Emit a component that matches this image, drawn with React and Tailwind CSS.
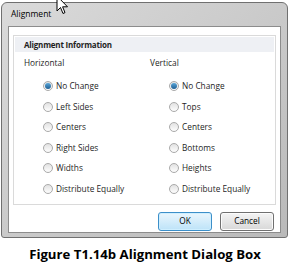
import React from "react";

const horizontal = ["No Change", "Left Sides", "Centers", "Right Sides", "Widths", "Distribute Equally"];
const vertical = ["No Change", "Tops", "Centers", "Bottoms", "Heights", "Distribute Equally"];

function Radio({ checked }) {
  return (
    <span className="w-[10px] h-[10px] rounded-full border border-[#a9a9a9] bg-gradient-to-b from-[#e2e2e2] to-[#fdfdfd] flex items-center justify-center shrink-0">
      {checked && <span className="w-[6px] h-[6px] rounded-full bg-gradient-to-b from-[#5aa7d9] to-[#1f5f93]" />}
    </span>
  );
}

function Column({ title, items }) {
  return (
    <div className="flex flex-col">
      <p className="h-[14px] leading-[14px]">{title}</p>
      <div className="flex flex-col gap-[10.6px] mt-[11px] pl-[19px]">
        {items.map((label, i) => (
          <label key={i} className="flex items-center gap-[3px] h-[10px] leading-[10px]">
            <Radio checked={i === 0} />
            <span>{label}</span>
          </label>
        ))}
      </div>
    </div>
  );
}

export default function App() {
  return (
    <div className="relative w-[290px] h-[270px] bg-white overflow-hidden text-[#1e1e1e] text-[8.3px]" style={{ fontFamily: '"Open Sans", "DejaVu Sans", sans-serif' }}>
      <div className="ml-[1px] mt-[2px] w-[287px] h-[236px] rounded-t-[6px] rounded-b-[3px] border border-[#707070] bg-gradient-to-br from-[#dadada] via-[#cacaca] to-[#b9b9b9] flex flex-col px-[6px] pb-[4px]">
        <div className="h-[23px] flex items-center pl-[3px] text-[8.5px] text-black">Alignment</div>
        <div className="flex-1 border border-[#8c8c8c] bg-white flex flex-col px-[4px] pt-[8px]">
          <div className="h-[170px] border border-[#dadada] flex flex-col px-[1px] pt-[1px]">
            <div className="h-[15px] bg-[#eef0f4] flex items-center pl-[9px] font-bold text-[8px] tracking-[-0.2px]">Alignment Information</div>
            <div className="grid grid-cols-[126px_1fr] pl-[9px] pt-[4px]">
              <Column title="Horizontal" items={horizontal} />
              <Column title="Vertical" items={vertical} />
            </div>
          </div>
          <div className="flex justify-end gap-[8px] mt-[7px] pr-[2px]">
            <button className="w-[54px] h-[19px] rounded-[3px] border border-[#3c8fc9] bg-gradient-to-b from-[#eaf6fd] to-[#bde3f8] text-[8.3px] text-black shadow-[inset_0_0_0_1px_#cfefff]">OK</button>
            <button className="w-[54px] h-[19px] rounded-[3px] border border-[#707070] bg-gradient-to-b from-[#f4f4f4] to-[#d8d8d8] text-[8.3px] text-black shadow-[inset_0_0_0_1px_#fcfcfc]">Cancel</button>
          </div>
        </div>
      </div>
      <p className="mt-[7px] text-center font-bold text-[13.2px] leading-[18px] text-black">Figure T1.14b Alignment Dialog Box</p>
      <svg className="absolute left-[56px] top-[-4px]" width="13" height="20" viewBox="0 0 13 20">
        <path d="M1 0 L1 15 L4.5 11.5 L7 17.5 L9 16.6 L6.6 10.8 L11.5 10.8 Z" fill="white" stroke="black" strokeWidth="1" strokeLinejoin="miter" />
      </svg>
    </div>
  );
}
